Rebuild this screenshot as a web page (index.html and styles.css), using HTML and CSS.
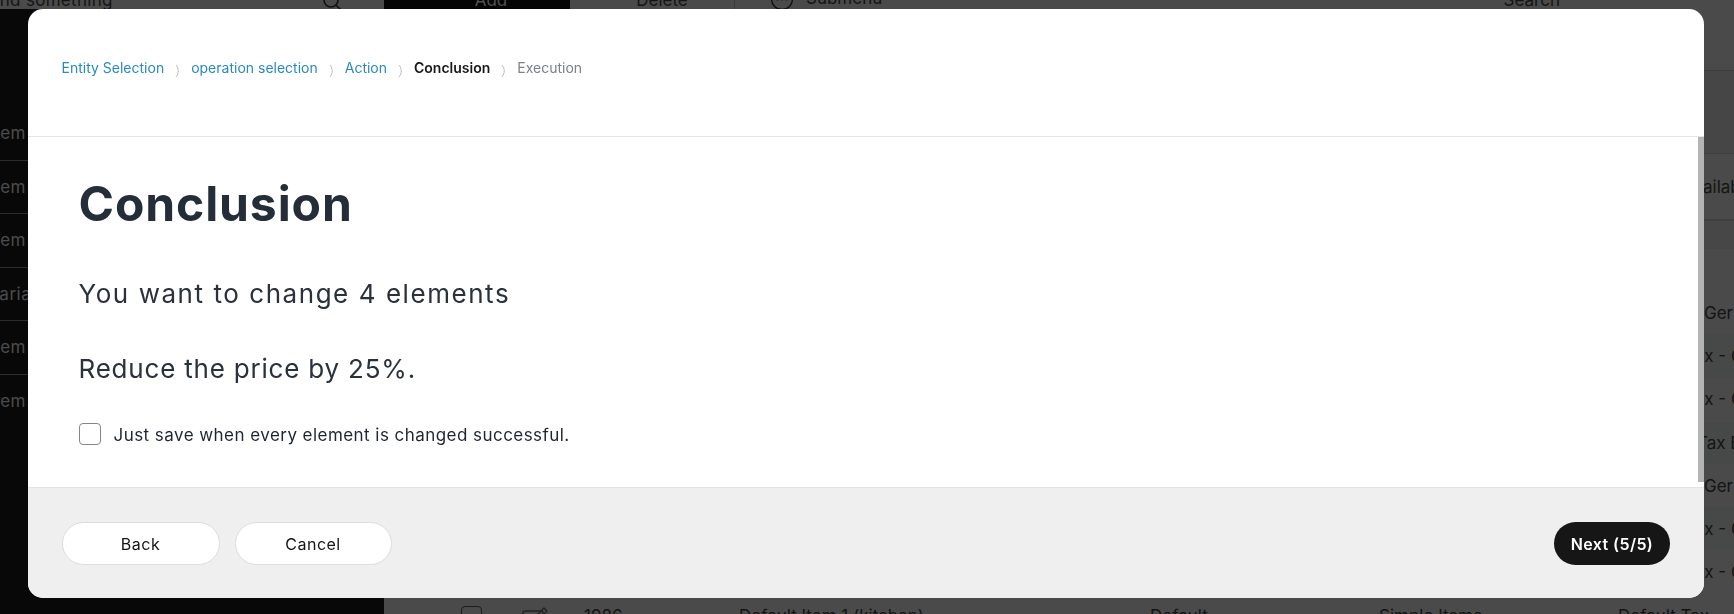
FILE: index.html
```html
<!DOCTYPE html>
<html lang="en">
<head>
<meta charset="utf-8">
<title>Bulk edit – Conclusion</title>
<link rel="stylesheet" href="styles.css">
</head>
<body>
<div class="app">
  <aside class="sidebar">
    <div class="search">
      <span class="search-text">Find something</span>
      <svg class="search-icon" width="22" height="22" viewBox="0 0 22 22"><circle cx="9" cy="9" r="7" fill="none" stroke="#111" stroke-width="1.6"/><path d="M14.2 14.2 L20 20" stroke="#111" stroke-width="1.6" stroke-linecap="round"/></svg>
    </div>
    <ul class="nav">
      <li class="nav-item">Item</li>
      <li class="nav-item">Item</li>
      <li class="nav-item">Item</li>
      <li class="nav-item nav-var">Variants</li>
      <li class="nav-item">Item</li>
      <li class="nav-item">Item</li>
    </ul>
  </aside>
  <main class="main">
    <div class="toolbar">
      <span class="tb-add">Add</span>
      <span class="tb-delete">Delete</span>
      <span class="tb-sub"><svg width="24" height="24" viewBox="0 0 24 24"><circle cx="12" cy="12" r="10.5" fill="none" stroke="#111" stroke-width="1.4"/><circle cx="7.5" cy="12" r="1.4" fill="#111"/><circle cx="12" cy="12" r="1.4" fill="#111"/><circle cx="16.5" cy="12" r="1.4" fill="#111"/></svg>Submenu</span>
      <span class="tb-search">Search</span>
    </div>
    <div class="band band-filter"></div>
    <div class="band band-top"></div>
    <div class="grid-row thead"><span class="c-avail">Available</span></div>
    <div class="band band-sub"></div>
    <div class="band band-gap"></div>
    <div class="rows">
      <div class="grid-row row"><span class="c-last">Germany</span></div>
      <div class="grid-row row alt"><span class="c-last shift">Tax - Germany</span></div>
      <div class="grid-row row"><span class="c-last shift">Tax - Germany</span></div>
      <div class="grid-row row alt"><span class="c-last tax">Tax EU</span></div>
      <div class="grid-row row"><span class="c-last">Germany</span></div>
      <div class="grid-row row alt"><span class="c-last shift">Tax - Germany</span></div>
      <div class="grid-row row"><span class="c-last shift">Tax - Germany</span></div>
      <div class="grid-row row row-full">
        <span class="c-check"></span>
        <svg class="c-edit" width="26" height="22" viewBox="0 0 26 22"><rect x="1" y="5" width="20" height="16" rx="2" fill="none" stroke="#222" stroke-width="1.4"/><path d="M10 14 L22 2 L25 5 L13 17 L9 18 Z" fill="none" stroke="#222" stroke-width="1.4"/></svg>
        <span class="c-id">1986</span>
        <span class="c-name">Default Item 1 (kitchen)</span>
        <span class="c-type">Default</span>
        <span class="c-kind">Simple Items</span>
        <span class="c-tax">Default Tax</span>
      </div>
    </div>
  </main>
</div>

<div class="overlay">
  <section class="modal">
    <header class="modal-head">
      <nav class="crumbs">
        <span class="crumb link">Entity Selection</span>
        <svg class="sep" width="5" height="14" viewBox="0 0 5 14"><path d="M1 1 C4 5 4 9 1 13" fill="none" stroke="#bcbcbc" stroke-width="1"/></svg>
        <span class="crumb link">operation selection</span>
        <svg class="sep" width="5" height="14" viewBox="0 0 5 14"><path d="M1 1 C4 5 4 9 1 13" fill="none" stroke="#bcbcbc" stroke-width="1"/></svg>
        <span class="crumb link">Action</span>
        <svg class="sep" width="5" height="14" viewBox="0 0 5 14"><path d="M1 1 C4 5 4 9 1 13" fill="none" stroke="#bcbcbc" stroke-width="1"/></svg>
        <span class="crumb current">Conclusion</span>
        <svg class="sep" width="5" height="14" viewBox="0 0 5 14"><path d="M1 1 C4 5 4 9 1 13" fill="none" stroke="#bcbcbc" stroke-width="1"/></svg>
        <span class="crumb future">Execution</span>
      </nav>
    </header>
    <div class="modal-body">
      <div class="content">
        <h1 class="title">Conclusion</h1>
        <p class="summary first">You want to change 4 elements</p>
        <p class="summary second">Reduce the price by 25%.</p>
        <label class="check-row">
          <span class="checkbox"></span>
          <span class="check-label">Just save when every element is changed successful.</span>
        </label>
      </div>
    </div>
    <footer class="modal-foot">
      <div class="foot-left">
        <button class="btn btn-light btn-back">Back</button>
        <button class="btn btn-light btn-cancel">Cancel</button>
      </div>
      <button class="btn btn-dark">Next (5/5)</button>
    </footer>
  </section>
</div>
</body>
</html>
```

FILE: styles.css
```css
html, body {
  margin: 0;
  padding: 0;
}

body {
  width: 1734px;
  height: 614px;
  overflow: hidden;
  background: #4a4a4a;
  font-family: Inter, "Open Sans", "DejaVu Sans", sans-serif;
  color: #111;
}

/* ---------- dimmed background application ---------- */
.app {
  display: grid;
  grid-template-columns: 384px minmax(0, 1fr);
  margin-top: -26px;
  height: 700px;
}

.sidebar {
  background: #080808;
}

.search {
  height: 35px;
  background: #4a4a4a;
  display: flex;
  align-items: flex-start;
  justify-content: space-between;
  padding: 15px 40px 0 0;
  box-sizing: border-box;
  overflow: visible;
}

.search-text {
  font-size: 17px;
  line-height: 22px;
  color: #141414;
  margin-left: -15px;
  letter-spacing: 0.3px;
}

.search-icon {
  margin-top: 2px;
}

.nav {
  list-style: none;
  margin: 98px 0 0;
  padding: 0;
}

.nav-item {
  height: 53.5px;
  line-height: 53.5px;
  font-size: 17px;
  letter-spacing: 0.5px;
  color: #4c4c4c;
  text-indent: -11px;
  overflow: hidden;
  white-space: nowrap;
  border-bottom: 1px solid #2c2c2c;
  box-sizing: border-box;
}

.nav-item.nav-var {
  text-indent: -12px;
}

.nav-item:last-child {
  border-bottom: none;
}

.main {
  display: flex;
  flex-direction: column;
  min-width: 0;
  overflow: hidden;
}

.toolbar {
  height: 35px;
  flex: none;
  display: flex;
  align-items: stretch;
  font-size: 17px;
  line-height: 22px;
  color: #141414;
}

.tb-add {
  width: 186px;
  padding: 15px 0 0 28px;
  box-sizing: border-box;
  background: #050505;
  color: #505050;
  text-align: center;
}

.tb-delete {
  width: 165px;
  padding: 15px 0 0 20px;
  box-sizing: border-box;
  border-right: 1px solid #3c3c3c;
  text-align: center;
}

.tb-sub {
  margin-left: 35px;
  padding-top: 13px;
  display: flex;
  align-items: flex-start;
  gap: 12px;
}

.tb-search {
  margin-left: auto;
  margin-right: 174px;
  padding-top: 15px;
}

.band {
  flex: none;
}

.band-filter {
  height: 61px;
  border-bottom: 1px solid #3e3e3e;
}

.band-top {
  height: 82px;
  background: #464646;
}

.grid-row {
  display: grid;
  grid-template-columns: 77px 61px 62px 155px 411px 229px 239px 82px minmax(0, 1fr);
  align-items: center;
  font-size: 17px;
  color: #141414;
  white-space: nowrap;
}

.thead {
  height: 66px;
  flex: none;
  border-top: 1px solid #404040;
  box-sizing: border-box;
}

.c-avail {
  grid-column: 9;
  margin-left: -17px;
}

.band-sub {
  height: 30px;
  background: #474747;
  border-top: 2px solid #3f3f3f;
  box-sizing: border-box;
}

.band-gap {
  height: 42px;
}

.row {
  height: 43.3px;
}

.row.alt {
  background: #474949;
}

.c-last {
  grid-column: 9;
  margin-left: 4px;
}

.c-last.shift {
  margin-left: -15px;
}

.c-last.tax {
  margin-left: -3px;
}

.row-full {
  align-items: start;
  padding-top: 12px;
  box-sizing: border-box;
}

.c-check {
  grid-column: 2;
  width: 19px;
  height: 19px;
  border: 1.5px solid #1c1c1c;
  border-radius: 4px;
}

.c-edit {
  grid-column: 3;
}

.c-id {
  grid-column: 4;
}

.c-name {
  grid-column: 5;
}

.c-type {
  grid-column: 6;
}

.c-kind {
  grid-column: 7;
}

.c-tax {
  grid-column: 8 / 10;
}

/* ---------- modal ---------- */
.overlay {
  position: fixed;
  inset: 0;
  padding: 9px 30px 16px 27.5px;
  display: flex;
}

.modal {
  flex: 1;
  background: #ffffff;
  border-radius: 15px;
  display: flex;
  flex-direction: column;
  overflow: hidden;
}

.modal-head {
  height: 128px;
  flex: none;
  box-sizing: border-box;
  border-bottom: 1px solid #e3e3e9;
  padding: 49px 34px 0;
}

.crumbs {
  display: flex;
  align-items: center;
  gap: 11px;
  font-size: 14px;
  line-height: 20px;
}

.sep {
  position: relative;
  top: 3px;
}

.crumb.link {
  color: #2a8abf;
}

.crumb.current {
  color: #181818;
  font-weight: 600;
}

.crumb.future {
  color: #7a7f8b;
}

.modal-body {
  flex: 1;
  position: relative;
  overflow: hidden;
}

/* scrollbar thumb of the scrollable body */
.modal-body::after {
  content: "";
  position: absolute;
  top: 0;
  right: 0;
  width: 6px;
  height: 345px;
  background: #b4b4b4;
}

.content {
  padding: 38px 51px 45px;
}

.title {
  margin: 0;
  font-size: 48px;
  line-height: 58px;
  font-weight: 700;
  letter-spacing: 0.9px;
  color: #252d39;
}

.summary {
  margin: 43px 0 0;
  font-size: 26px;
  line-height: 36px;
  font-weight: 400;
  color: #29313d;
}

.summary.first {
  letter-spacing: 1.55px;
}

.summary.second {
  margin-top: 39px;
  letter-spacing: 0.8px;
}

.check-row {
  margin-top: 35px;
  display: flex;
  align-items: center;
  gap: 13px;
}

.checkbox {
  width: 22px;
  height: 22px;
  box-sizing: border-box;
  border: 1.5px solid #868686;
  border-radius: 4px;
  background: #fff;
}

.check-label {
  font-size: 17px;
  line-height: 22px;
  letter-spacing: 0.45px;
  color: #1f2530;
  padding-top: 2px;
}

.modal-foot {
  flex: none;
  height: 111px;
  box-sizing: border-box;
  border-top: 1px solid #e2e2e8;
  background: #efefef;
  padding: 34px 34px 0;
  display: flex;
  justify-content: space-between;
  align-items: flex-start;
}

.foot-left {
  display: flex;
  gap: 15px;
}

.btn {
  height: 43px;
  border-radius: 22px;
  font-family: inherit;
  font-size: 16px;
  cursor: pointer;
}

.btn-light {
  background: #ffffff;
  border: 1px solid #dcdcdc;
  color: #141414;
  letter-spacing: 0.5px;
}

.btn-back {
  width: 158px;
}

.btn-cancel {
  width: 157px;
}

.btn-dark {
  width: 116px;
  background: #161616;
  border: none;
  color: #ffffff;
  font-weight: 600;
  letter-spacing: 0.4px;
}
```
